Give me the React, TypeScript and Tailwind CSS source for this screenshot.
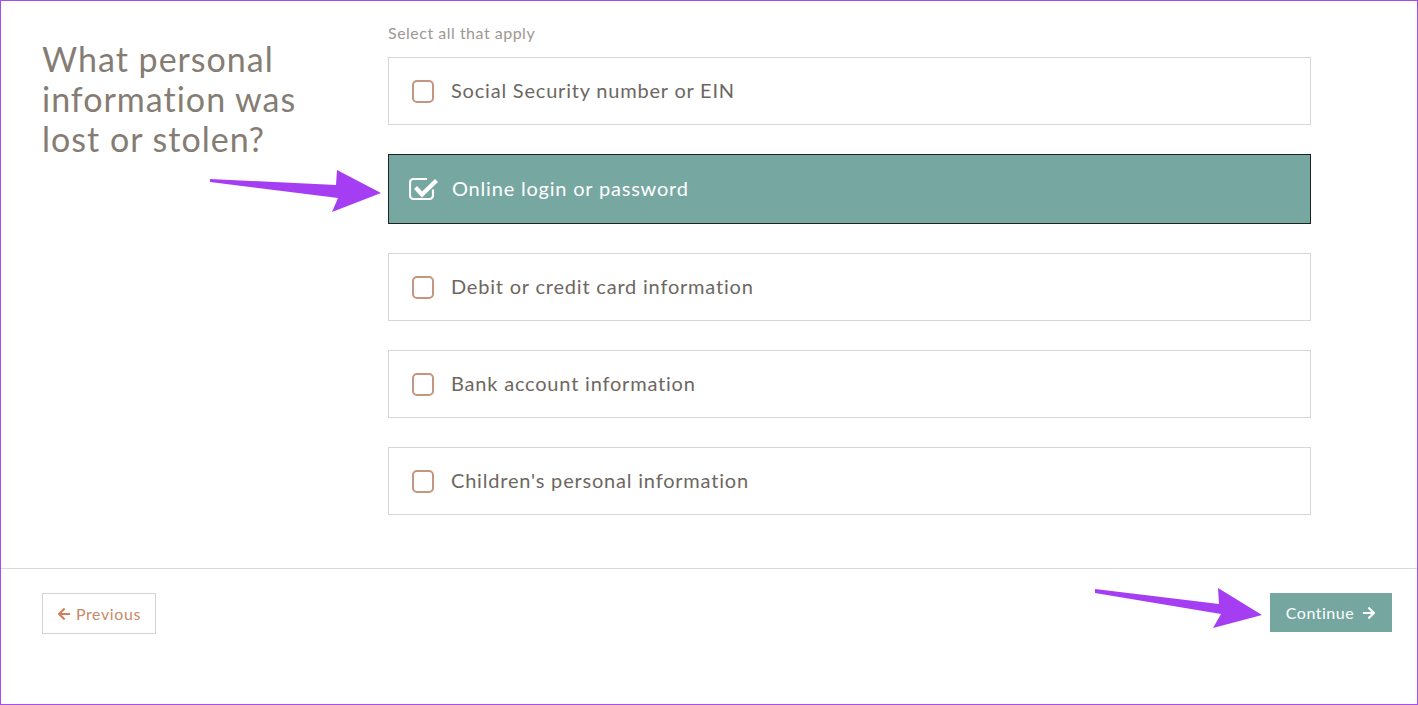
import { FaArrowLeft, FaArrowRight } from "react-icons/fa";

interface Option {
  label: string;
  checked: boolean;
}

const options: Option[] = [
  { label: "Social Security number or EIN", checked: false },
  { label: "Online login or password", checked: true },
  { label: "Debit or credit card information", checked: false },
  { label: "Bank account information", checked: false },
  { label: "Children's personal information", checked: false },
];

function EmptyBox() {
  return (
    <svg width="22" height="23" viewBox="0 0 22 23" className="shrink-0">
      <rect x="1" y="1" width="20" height="21" rx="4" fill="none" stroke="#c4967d" strokeWidth="2" />
    </svg>
  );
}

function CheckedBox() {
  return (
    <svg width="30" height="25" viewBox="0 0 30 25" className="shrink-0">
      <path
        d="M18 2 H4.5 a3.5 3.5 0 0 0 -3.5 3.5 v13 a3.5 3.5 0 0 0 3.5 3.5 h16 a3.5 3.5 0 0 0 3.5 -3.5 v-6"
        fill="none"
        stroke="#fff"
        strokeWidth="2.2"
      />
      <path d="M6.5 10.5 L13 17.5 L27.5 3.5" fill="none" stroke="#fff" strokeWidth="4.2" strokeLinejoin="miter" />
    </svg>
  );
}

function OptionRow({ label, checked }: Option) {
  if (checked) {
    return (
      <div className="flex h-[70px] items-center gap-[13px] border border-[#1d2321] bg-[#76a7a1] pl-[20px]">
        <CheckedBox />
        <span className="pb-[3px] text-[20px] tracking-[0.8px] text-white">{label}</span>
      </div>
    );
  }
  return (
    <div className="flex h-[68px] items-center gap-[17px] border border-[#d6d6d6] bg-white pl-[23px]">
      <EmptyBox />
      <span className="pb-[3px] text-[20px] tracking-[0.8px] text-[#6d6761]">{label}</span>
    </div>
  );
}

export default function App() {
  return (
    <div className="relative flex h-[705px] w-[1418px] flex-col overflow-hidden border border-[#a64cf0] bg-white font-['Lato',sans-serif]">
      <div className="flex h-[568px] shrink-0 border-b border-[#dadada]">
        <div className="w-[387px] shrink-0 pl-[41px] pt-[38px]">
          <h1 className="text-[34px] font-normal leading-[40px] tracking-[1px] text-[#857d74]">
            What personal
            <br />
            information was
            <br />
            lost or stolen?
          </h1>
        </div>
        <div className="w-[923px] pt-[22px]">
          <p className="mb-[14px] text-[16px] leading-[20px] tracking-[0.5px] text-[#9e9893]">Select all that apply</p>
          <div className="flex flex-col gap-[29px]">
            {options.map(o => (
              <OptionRow key={o.label} {...o} />
            ))}
          </div>
        </div>
      </div>
      <div className="flex items-start justify-between pl-[41px] pr-[25px] pt-[24px]">
        <button className="flex h-[41px] w-[114px] items-center justify-center gap-[5px] border border-[#d3d3d3] bg-white text-[16px] tracking-[0.6px] text-[#c98a69]">
          <FaArrowLeft className="text-[14px] text-[#d07f59]" />
          Previous
        </button>
        <button className="flex h-[39px] w-[122px] items-center justify-center gap-[8px] bg-[#75a6a0] text-[16px] tracking-[0.5px] text-white">
          Continue
          <FaArrowRight className="text-[14px]" />
        </button>
      </div>
      <svg className="pointer-events-none absolute left-[-1px] top-[-1px]" width="1418" height="705" viewBox="0 0 1418 705">
        <polygon points="210,179 336,185 337,170 381,193 332,212 338,198 210,182" fill="#a53ef3" />
        <polygon points="1095,589 1219,604 1218,588 1262,615 1213,628 1221,614 1095,593" fill="#a53ef3" />
      </svg>
    </div>
  );
}
